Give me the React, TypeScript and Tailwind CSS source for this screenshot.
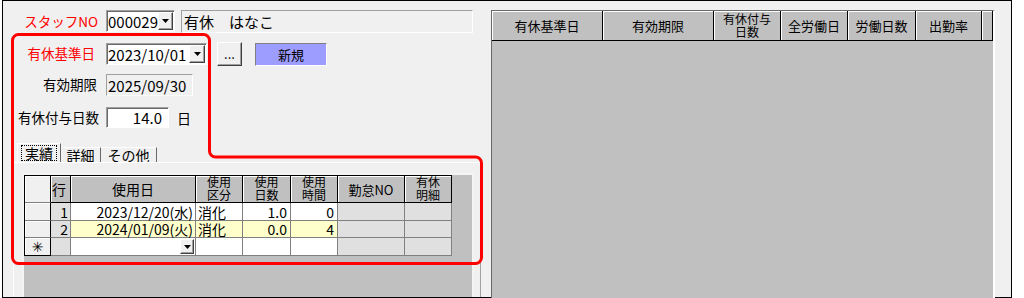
import React from "react";

const FONT = "font-['Noto_Sans_CJK_JP',sans-serif]";

function Tri() {
  return (
    <svg width="7" height="4" viewBox="0 0 7 4">
      <path d="M0 0H7L3.5 4Z" fill="#000" />
    </svg>
  );
}

function DropBtn({ className = "" }: { className?: string }) {
  return (
    <div
      className={`flex items-center justify-center bg-[#f0f0f0] border border-t-white border-l-white border-r-[#404040] border-b-[#404040] shadow-[inset_-1px_-1px_0_#a0a0a0] ${className}`}
    >
      <Tri />
    </div>
  );
}

const sunkenWhite =
  "bg-white border border-t-[#a0a0a0] border-l-[#a0a0a0] border-r-white border-b-white shadow-[inset_1px_1px_0_#696969]";
const sunkenGray =
  "bg-[#f0f0f0] border border-t-[#a0a0a0] border-l-[#a0a0a0] border-r-white border-b-white";

function Label({ text, red, pr }: { text: string; red?: boolean; pr: string }) {
  return (
    <div className={`w-[103px] flex justify-end text-[13.5px] leading-none ${pr} ${red ? "text-[#ff0000]" : "text-black"}`}>
      {text}
    </div>
  );
}

const hdr =
  "bg-[#c0c0c0] border-r border-b border-black shadow-[inset_1px_1px_0_#ffffff] flex flex-col items-center justify-center text-[12px] leading-[12px]";
const cell = "border-r border-b border-[#808080] flex items-center text-[14px] leading-none";

function RightHeader({ w, children }: { w: string; children?: React.ReactNode }) {
  return (
    <div className={`${w} h-full bg-[#c0c0c0] border-r border-black shadow-[inset_1px_1px_0_#ffffff] flex flex-col items-center justify-center text-[13px] leading-[13px]`}>
      {children}
    </div>
  );
}

function Two({ a, b }: { a: string; b: string }) {
  return (
    <>
      <span className="block h-[13px] leading-[12px]">{a}</span>
      <span className="block h-[13px] leading-[12px]">{b}</span>
    </>
  );
}

export default function App() {
  return (
    <div className={`relative w-[1024px] h-[298px] bg-white overflow-hidden text-black ${FONT}`}>
      <div className="ml-[2px] w-[1010px] h-[298px] border border-black bg-[#f0f0f0] flex">
        {/* LEFT PANEL */}
        <div className="w-[488px] h-full flex flex-col">
          {/* Row 1 */}
          <div className="mt-[9px] h-[23px] flex items-center">
            <Label text="スタッフNO" red pr="pr-[8px]" />
            <div className={`w-[69px] h-[22px] self-start flex items-center ${sunkenWhite}`}>
              <span className="flex-1 pl-[1px] text-[15px] leading-none">000029</span>
              <DropBtn className="w-[16px] h-[18px] mr-[1px]" />
            </div>
            <div className={`ml-[6px] w-[292px] h-[23px] flex items-center pl-[2px] text-[15px] leading-none ${sunkenGray}`}>
              有休　はなこ
            </div>
          </div>
          {/* Row 2 */}
          <div className="mt-[9px] h-[24px] flex items-center">
            <Label text="有休基準日" red pr="pr-[11px]" />
            <div className={`w-[101px] h-[22px] flex items-center ${sunkenWhite}`}>
              <span className="flex-1 pl-[1px] text-[15px] leading-none">2023/10/01</span>
              <DropBtn className="w-[16px] h-[18px] mr-[1px]" />
            </div>
            <div className="ml-[10px] w-[25px] h-[24px] bg-[#f0f0f0] border border-t-white border-l-white border-r-[#404040] border-b-[#404040] shadow-[inset_-1px_-1px_0_#a0a0a0] flex items-end justify-center pb-[5px] text-[13px] leading-none">
              ...
            </div>
            <div className="ml-[13px] w-[72px] h-[23px] border border-t-[#808080] border-l-[#808080] border-r-white border-b-white bg-[#9d9dff] flex items-center justify-center text-[13px] leading-none">
              新規
            </div>
          </div>
          {/* Row 3 */}
          <div className="mt-[8px] h-[22px] flex items-center">
            <Label text="有効期限" pr="pr-[9px]" />
            <div className={`w-[87px] h-[22px] flex items-center pl-[1px] text-[15px] leading-none ${sunkenGray}`}>
              2025/09/30
            </div>
          </div>
          {/* Row 4 */}
          <div className="mt-[11px] h-[21px] flex items-center">
            <Label text="有休付与日数" pr="pr-[7px]" />
            <div className={`w-[63px] h-[21px] flex items-center justify-end pr-[6px] text-[15px] leading-none ${sunkenWhite}`}>
              14.0
            </div>
            <span className="ml-[8px] text-[14px] leading-none">日</span>
          </div>
          {/* Tabs */}
          <div className="mt-[15px] ml-[14px] h-[19px] flex items-end">
            <div className="w-[44px] h-[19px] border-l border-t border-white border-r border-r-[#696969] flex items-center justify-center">
              <span className="border border-dotted border-black px-[3px] h-[16px] flex items-center text-[14px] leading-none">実績</span>
            </div>
            <div className="w-[40px] h-[15px] border-t border-white border-r border-r-[#696969] flex items-center justify-center text-[14px] leading-none">
              詳細
            </div>
            <div className="w-[56px] h-[15px] border-t border-white border-r border-r-[#696969] flex items-center justify-center text-[14px] leading-none">
              その他
            </div>
          </div>
          {/* Tab page */}
          <div className="ml-[10px] w-[468px] flex-1 border-t border-l border-white border-r border-r-[#a0a0a0] pl-[8px] pt-[10px]">
            <div className="w-[452px] h-full bg-[#c0c0c0] border-t-2 border-l-2 border-r-2 border-[#f4f4f4]">
              <div className="w-[428px] border-t border-l border-black grid grid-cols-[26px_20px_125px_47px_48px_47px_67px_47px]">
                {/* header */}
                <div className="h-[27px] bg-[#f0f0f0] border-r border-black border-b border-b-[#808080] shadow-[inset_1px_1px_0_#ffffff]" />
                <div className={`${hdr} !items-start pl-[1px] !text-[14px] !leading-none`}>行</div>
                <div className={`${hdr} !text-[14px] !leading-none`}>使用日</div>
                <div className={hdr}>
                  <Two a="使用" b="区分" />
                </div>
                <div className={hdr}>
                  <Two a="使用" b="日数" />
                </div>
                <div className={hdr}>
                  <Two a="使用" b="時間" />
                </div>
                <div className={`${hdr} !text-[13px] !leading-none`}>勤怠NO</div>
                <div className={hdr}>
                  <Two a="有休" b="明細" />
                </div>

                {/* row 1 */}
                <div className="h-[18px] bg-[#f0f0f0] border-r border-black border-b border-b-[#808080] shadow-[inset_1px_1px_0_#ffffff]" />
                <div className={`${cell} bg-[#e0e0e0] justify-end pr-[2px]`}>1</div>
                <div className={`${cell} bg-white justify-end pr-[2px]`}>2023/12/20(水)</div>
                <div className={`${cell} bg-white pl-[2px]`}>消化</div>
                <div className={`${cell} bg-white justify-end pr-[3px]`}>1.0</div>
                <div className={`${cell} bg-white justify-end pr-[3px]`}>0</div>
                <div className={`${cell} bg-[#e0e0e0]`} />
                <div className={`${cell} bg-[#e0e0e0]`} />

                {/* row 2 */}
                <div className="h-[17px] bg-[#f0f0f0] border-r border-black border-b border-b-[#808080] shadow-[inset_1px_1px_0_#ffffff]" />
                <div className={`${cell} bg-[#e0e0e0] justify-end pr-[2px]`}>2</div>
                <div className={`${cell} bg-[#ffffcc] justify-end pr-[2px]`}>2024/01/09(火)</div>
                <div className={`${cell} bg-[#ffffcc] pl-[2px]`}>消化</div>
                <div className={`${cell} bg-[#ffffcc] justify-end pr-[3px]`}>0.0</div>
                <div className={`${cell} bg-[#ffffcc] justify-end pr-[3px]`}>4</div>
                <div className={`${cell} bg-[#e0e0e0]`} />
                <div className={`${cell} bg-[#e0e0e0]`} />

                {/* new row */}
                <div className="h-[18px] bg-[#f0f0f0] border-r border-b border-black shadow-[inset_1px_1px_0_#ffffff] flex items-center justify-center text-[14px] leading-none font-['DejaVu_Sans',sans-serif] font-bold">
                  ✳
                </div>
                <div className={`${cell} bg-[#e0e0e0]`} />
                <div className={`${cell} bg-white justify-end`}>
                  <DropBtn className="w-[14px] h-[15px] mr-[1px]" />
                </div>
                <div className={`${cell} bg-white`} />
                <div className={`${cell} bg-white`} />
                <div className={`${cell} bg-white`} />
                <div className={`${cell} bg-[#e0e0e0]`} />
                <div className={`${cell} bg-[#e0e0e0]`} />
              </div>
            </div>
          </div>
        </div>

        {/* RIGHT PANEL */}
        <div className="mt-[9px] w-[504px] h-[288px] bg-[#c0c0c0] border-t border-l border-[#696969] border-r-2 border-r-white flex flex-col">
          <div className="h-[30px] flex border-b border-black">
            <RightHeader w="w-[111px]">有休基準日</RightHeader>
            <RightHeader w="w-[111px]">有効期限</RightHeader>
            <RightHeader w="w-[67px]">
              <span className="block h-[13px] leading-[12px] text-[12px]">有休付与</span>
              <span className="block h-[13px] leading-[12px] text-[12px]">日数</span>
            </RightHeader>
            <RightHeader w="w-[67px]">全労働日</RightHeader>
            <RightHeader w="w-[68px]">労働日数</RightHeader>
            <RightHeader w="w-[66px]">出勤率</RightHeader>
            <RightHeader w="flex-1" />
          </div>
        </div>
      </div>

      {/* red annotation */}
      <svg className="absolute left-0 top-0 pointer-events-none" width="1024" height="298" viewBox="0 0 1024 298">
        <path
          d="M12.5 40.5A6 6 0 0 1 18.5 34.5H203.5A6 6 0 0 1 209.5 40.5V151A6 6 0 0 0 215.5 157H475.5A6 6 0 0 1 481.5 163V257.5A6 6 0 0 1 475.5 263.5H18.5A6 6 0 0 1 12.5 257.5Z"
          fill="none"
          stroke="#ff0000"
          strokeWidth="3"
        />
      </svg>
    </div>
  );
}
